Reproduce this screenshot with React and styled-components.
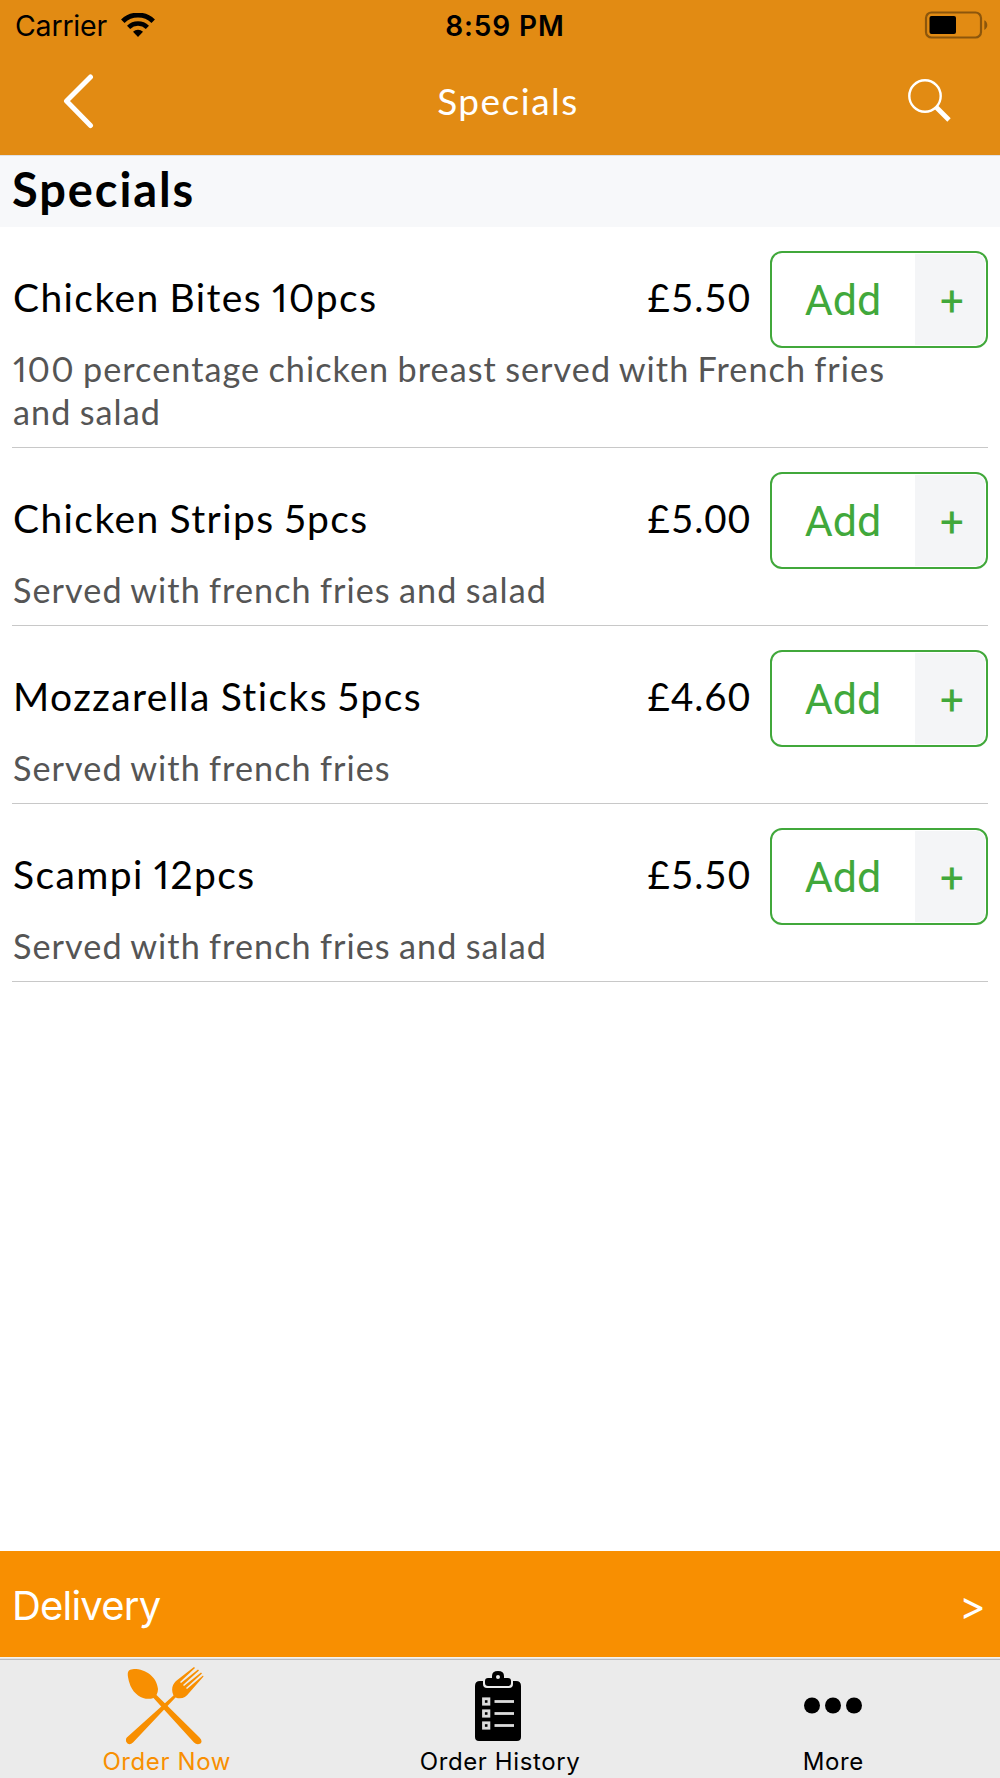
import React from 'react';
import styled, { createGlobalStyle } from 'styled-components';

const GlobalStyle = createGlobalStyle`
  * {
    box-sizing: border-box;
  }
  body {
    margin: 0;
    background: #fff;
    color: #000;
    font-family: Lato, 'Open Sans', sans-serif;
  }
  h1, h2, h3, p {
    margin: 0;
    font-weight: normal;
  }
  button {
    padding: 0;
    border: 0;
    background: none;
    font: inherit;
    color: inherit;
  }
  svg {
    display: block;
  }
`;

const Screen = styled.div`
  width: 1000px;
  height: 1778px;
  display: flex;
  flex-direction: column;
`;

const Header = styled.header`
  height: 155px;
  background: #e28b13;
`;

const StatusBar = styled.div`
  height: 48px;
  padding: 3px 12px 0 15px;
  display: grid;
  grid-template-columns: 1fr auto 1fr;
  align-items: center;
  font-family: Inter, sans-serif;
  font-size: 28.5px;
`;

const Carrier = styled.div`
  display: flex;
  align-items: center;
  gap: 14px;
  letter-spacing: -0.2px;
`;

const Clock = styled.div`
  padding-left: 7px;
  font-weight: 600;
  font-size: 28px;
  letter-spacing: 0.9px;
`;

const BatteryCell = styled.div`
  justify-self: end;
  padding-bottom: 2px;
`;

const NavBar = styled.div`
  height: 107px;
  padding: 0 49px 0 62px;
  display: grid;
  grid-template-columns: 1fr auto 1fr;
  align-items: center;

  button {
    padding-bottom: 2px;
  }
  button:last-child {
    justify-self: end;
    padding-bottom: 3px;
  }
`;

const NavTitle = styled.h1`
  padding: 0 0 3px 3px;
  color: #fff;
  font-size: 37px;
  letter-spacing: 1.5px;
`;

const SectionTitle = styled.h2`
  height: 72px;
  padding: 0 12px;
  border-top: 1px solid #dfe1e5;
  background: #f7f8fa;
  font-size: 47px;
  font-weight: bold;
  line-height: 66px;
  letter-spacing: 1.9px;
`;

const Menu = styled.main`
  flex: 1;
  padding: 0 12px;
`;

const Item = styled.article`
  padding: 24px 0 13px;
  border-bottom: 1px solid #c8c8c8;
`;

const ItemRow = styled.div`
  height: 97px;
  display: flex;
  align-items: center;
`;

const ItemName = styled.h3`
  flex: 1;
  padding: 0 0 5px 1px;
  font-size: 39px;
  font-variant-numeric: proportional-nums;
  letter-spacing: 1.4px;
  word-spacing: -1.5px;
`;

const Price = styled.div`
  padding: 0 19px 5px 0;
  font-size: 38.5px;
  letter-spacing: 1px;
`;

const Description = styled.p`
  max-width: 900px;
  margin: -1px 0 1px;
  padding-left: 1px;
  color: #555;
  font-size: 34.2px;
  font-variant-numeric: proportional-nums;
  line-height: 43px;
  letter-spacing: 1.05px;
  word-spacing: -1.5px;
`;

const AddButton = styled.button`
  width: 218px;
  height: 97px;
  padding: 1px;
  display: flex;
  border: 2px solid #41a83b;
  border-radius: 12px;
  color: #41a83b;
  font-family: Roboto, sans-serif;
`;

const AddLabel = styled.span`
  flex: 1;
  padding-right: 2px;
  font-size: 43px;
  line-height: 92px;
`;

const AddPlus = styled.span`
  width: 70px;
  height: 91px;
  padding-left: 4px;
  background: #f4f5f7;
  border-radius: 0 9px 9px 0;
  font-size: 42px;
  line-height: 96px;
`;

const DeliveryBar = styled.div`
  height: 106px;
  padding: 2px 15px 0 12px;
  display: flex;
  align-items: center;
  justify-content: space-between;
  background: #f88f01;
  color: #fff;
  font-family: Inter, sans-serif;
  font-size: 40px;
  letter-spacing: -0.8px;
`;

const TabBar = styled.nav`
  height: 121px;
  border-top: 1px solid #f4f2ee;
  display: grid;
  grid-template-columns: repeat(3, 1fr);
  background: #ebebeb;
  box-shadow: inset 0 1px #e4e4e4, inset 0 2px #bcbcbf;
`;

const Tab = styled.button`
  display: flex;
  flex-direction: column;
  align-items: center;
  justify-content: space-between;
  padding: 9px 0 1px;
  color: ${({ $active }) => ($active ? '#f88f01' : '#000')};
  font-family: Inter, sans-serif;
  font-size: 24px;
  line-height: 30px;
  letter-spacing: 0.6px;
`;

const TabIcon = styled.div`
  height: 78px;
  padding-right: 3px;
  display: flex;
  align-items: center;
`;

const WifiIcon = () => (
  <svg width="34" height="25" viewBox="0 0 34 25" fill="none" stroke="#000">
    <path d="M1.8 8.2a22 22 0 0 1 30.4 0" strokeWidth="5" />
    <path d="M7.6 14.3a13.7 13.7 0 0 1 18.8 0" strokeWidth="4.6" />
    <path d="M12 18.7a7.3 7.3 0 0 1 10 0l-5 5.3z" fill="#000" stroke="none" />
  </svg>
);

const BatteryIcon = () => (
  <svg width="64" height="28" viewBox="0 0 64 28">
    <rect x="2" y="1.5" width="55" height="25" rx="5.5" fill="none" stroke="#8c560c" strokeWidth="2.2" />
    <rect x="5.5" y="5" width="26.5" height="18" rx="2" />
    <path d="M60.3 9.2c4 1.8 4 8 0 9.8z" fill="#8c560c" />
  </svg>
);

const BackIcon = () => (
  <svg width="32" height="56" viewBox="0 0 32 56" fill="none" stroke="#fff" strokeWidth="5" strokeLinecap="round" strokeLinejoin="round">
    <path d="M28.5 4L4.500 28l24 24.500" />
  </svg>
);

const SearchIcon = () => (
  <svg width="44" height="44" viewBox="0 0 44 44" fill="none" stroke="#fff">
    <circle cx="18" cy="18" r="15.7" strokeWidth="2.4" />
    <path d="M29 29l13 13" strokeWidth="4.8" />
  </svg>
);

const CutleryIcon = () => (
  <svg width="78" height="78" viewBox="0 0 78 78" fill="currentColor">
    <path d="M2 10C1 4 3 2.300 8 2C20 2 31 10 32 22Q32 25 30.500 28L73.500 70.500Q77 74 74.500 76.500Q71 78.500 68 75.500L27.500 31C19 34 9 29 4.500 19Q2.500 14 2 10Z" />
    <path d="M.8 70.500L47.500 28.500C45 23 46 18 50 14L68 0L69 1L54 15L55 16L72 2.500L73 3.500L57 18L58 19L75 5.500L76 6.500L60 21L61 22L77 8.500L77.500 9.500L63 26C59.500 31 55 32.500 49.500 30.500L7 75.500Q4 78.500 1.500 76.500Q-1.500 73.500 .8 70.500Z" />
  </svg>
);

const ClipboardIcon = () => (
  <svg width="48" height="72" viewBox="0 0 48 72">
    <path d="M6 11h3v3q0 4 4 4h22q4 0 4-4v-3h3q5 0 5 5v51q0 4-4 4H5q-4 0-4-4V16q0-5 5-5z" />
    <path fillRule="evenodd" d="M14 8h4V6q0-5 6-5t6 5v2h4q3 0 3 3v2q0 3-3 3H14q-3 0-3-3v-2q0-3 3-3zM24 5a2 2 0 1 0 0 4a2 2 0 0 0 0-4z" />
    {[31.5, 43.5, 55.5].map((y) => (
      <g key={y} fill="none" stroke="#dcdcdc">
        <rect x="9.500" y={y - 2.7} width="5.400" height="5.400" strokeWidth="2.800" />
        <path d={`M20.500 ${y}h19.500`} strokeWidth="2.800" />
      </g>
    ))}
  </svg>
);

const MoreIcon = () => (
  <svg width="60" height="18" viewBox="0 0 60 18">
    <circle cx="10" cy="8.5" r="8" />
    <circle cx="31" cy="8.5" r="8" />
    <circle cx="52" cy="8.5" r="8" />
  </svg>
);

const items = [
  {
    name: 'Chicken Bites 10pcs',
    price: '£5.50',
    description: '100 percentage chicken breast served with French fries and salad',
  },
  { name: 'Chicken Strips 5pcs', price: '£5.00', description: 'Served with french fries and salad' },
  { name: 'Mozzarella Sticks 5pcs', price: '£4.60', description: 'Served with french fries' },
  { name: 'Scampi 12pcs', price: '£5.50', description: 'Served with french fries and salad' },
];

const MenuItem = ({ name, price, description }) => (
  <Item>
    <ItemRow>
      <ItemName>{name}</ItemName>
      <Price>{price}</Price>
      <AddButton>
        <AddLabel>Add</AddLabel>
        <AddPlus>+</AddPlus>
      </AddButton>
    </ItemRow>
    <Description>{description}</Description>
  </Item>
);

const App = () => (
  <Screen>
    <GlobalStyle />
    <Header>
      <StatusBar>
        <Carrier>
          Carrier
          <WifiIcon />
        </Carrier>
        <Clock>8:59 PM</Clock>
        <BatteryCell>
          <BatteryIcon />
        </BatteryCell>
      </StatusBar>
      <NavBar>
        <button type="button" aria-label="Back">
          <BackIcon />
        </button>
        <NavTitle>Specials</NavTitle>
        <button type="button" aria-label="Search">
          <SearchIcon />
        </button>
      </NavBar>
    </Header>
    <SectionTitle>Specials</SectionTitle>
    <Menu>
      {items.map((item) => (
        <MenuItem key={item.name} {...item} />
      ))}
    </Menu>
    <DeliveryBar>
      <span>Delivery</span>
      <span>&gt;</span>
    </DeliveryBar>
    <TabBar>
      <Tab $active>
        <TabIcon>
          <CutleryIcon />
        </TabIcon>
        Order Now
      </Tab>
      <Tab>
        <TabIcon>
          <ClipboardIcon />
        </TabIcon>
        Order History
      </Tab>
      <Tab>
        <TabIcon>
          <MoreIcon />
        </TabIcon>
        More
      </Tab>
    </TabBar>
  </Screen>
);

export default App;
